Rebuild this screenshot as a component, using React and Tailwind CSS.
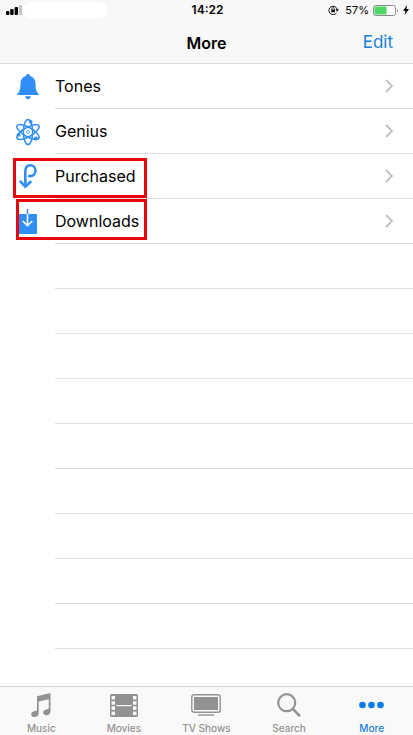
import React from 'react';

function BellIcon() {
  return (
    <svg width="22" height="26" viewBox="0 0 22 26" fill="#2f8ff5" aria-hidden="true">
      <path d="M11 0c1.200 0 2 .8 2.100 1.900C16.500 2.900 18.500 5.500 18.500 9.500c0 5.500.9 8.300 2.900 10 .5.500.6 1.600-.4 1.600H1c-1 0-.9-1.100-.4-1.600 2-1.700 2.900-4.500 2.900-10 0-4 2-6.600 5.400-7.600C9 .8 9.800 0 11 0z" />
      <path d="M8.300 22.300h5.400c0 1.700-1.100 2.900-2.700 2.900s-2.700-1.200-2.700-2.900z" />
    </svg>
  );
}

function AtomIcon() {
  return (
    <svg width="26" height="28" viewBox="0 0 26 28" fill="none" stroke="#2f8ff5" strokeWidth="1.500" aria-hidden="true">
      <ellipse cx="13" cy="14" rx="4.600" ry="12.600" />
      <ellipse cx="13" cy="14" rx="4.600" ry="12.600" transform="rotate(60 13 14)" />
      <ellipse cx="13" cy="14" rx="4.600" ry="12.600" transform="rotate(120 13 14)" />
      <circle cx="13" cy="14" r="1.600" strokeWidth=".8" />
      <circle cx="15.700" cy="3.800" r="1.900" fill="#2f8ff5" stroke="none" />
      <circle cx="3.600" cy="16.800" r="1.900" fill="#2f8ff5" stroke="none" />
      <circle cx="20.800" cy="20.300" r="1.900" fill="#2f8ff5" stroke="none" />
    </svg>
  );
}

function PurchasedIcon() {
  return (
    <svg width="18" height="25" viewBox="0 0 18 25" fill="none" stroke="#2f8ff5" strokeWidth="2.600" aria-hidden="true">
      <path d="M6.300 22.500V7c0-3.500 2-5.700 4.900-5.700 3 0 5.300 2.300 5.300 5.400s-2.300 5.400-5.300 5.400c-.9 0-1.500-.2-2-.5" />
      <path d="M.9 16.800l5.400 5.900 6-5.500" />
    </svg>
  );
}

function DownloadsIcon() {
  return (
    <svg width="19" height="25" viewBox="0 0 19 25" fill="none" aria-hidden="true">
      <path d="M1 5h18v20H1z" fill="#2f8ff5" />
      <path d="M9.500 0v5" stroke="#2f8ff5" strokeWidth="1.500" />
      <path d="M9.500 5v11.500M4.800 12l4.700 4.700 4.700-4.700" stroke="#fff" strokeWidth="1.600" />
    </svg>
  );
}

function Chevron() {
  return (
    <svg width="8" height="14" viewBox="0 0 8 14" fill="none" stroke="#c0c0c4" strokeWidth="1.900" aria-hidden="true">
      <path d="M1 1l6 6-6 6" />
    </svg>
  );
}

function SignalIcon() {
  return (
    <svg width="17" height="10" viewBox="0 0 17 10" aria-hidden="true">
      <rect x="0" y="6" width="3.400" height="4" rx="1" />
      <rect x="4.200" y="4" width="3.400" height="6" rx="1" />
      <rect x="8.600" y="2" width="3.400" height="8" rx="1" />
      <rect x="13" y="0" width="3" height="10" rx="1" fill="#c4c4c4" />
    </svg>
  );
}

function LockIcon() {
  return (
    <svg width="11" height="10" viewBox="0 0 11 10" fill="none" stroke="#111" aria-hidden="true">
      <path d="M8.500 7.900A4.200 4.200 0 1 1 9.200 4.500" />
      <path d="M7.400 4.300h3.600L9.200 6.700z" fill="#111" stroke="none" />
      <rect x="3.200" y="4.500" width="3.800" height="2.800" fill="#111" stroke="none" />
      <path d="M4 4.500V3.600a1.100 1.100 0 0 1 2.200 0v.9" strokeWidth=".8" />
    </svg>
  );
}

function BatteryIcon() {
  return (
    <svg width="26" height="11" viewBox="0 0 26 11" fill="none" aria-hidden="true">
      <rect x=".5" y=".5" width="22" height="10" rx="2" fill="#fff" stroke="#8b8b8b" />
      <rect x="1.500" y="1.500" width="12" height="8" fill="#4cd964" />
      <path d="M24 3.800c1.300.3 1.300 3.100 0 3.400z" fill="#8b8b8b" />
    </svg>
  );
}

function BoltIcon() {
  return (
    <svg width="6" height="10" viewBox="0 0 6 10" aria-hidden="true">
      <path d="M4.200 0L0 5.700h2.400L1.600 10 6 4.100H3.400z" />
    </svg>
  );
}

function MusicIcon() {
  return (
    <svg width="20" height="24" viewBox="0 0 20 24" fill="#929292" aria-hidden="true">
      <path d="M6 3.200L19.500 0v18.200c0 2.400-1.700 4-4.100 4-1.900 0-3.200-1-3.200-2.600 0-2 1.600-3 3.800-3.400 1.200-.2 1.800-.5 1.800-1.500V6.200L7.700 8.600V20c0 2.400-1.700 4-4.200 4C1.500 24 .2 23 .2 21.400c0-2 1.500-3 3.800-3.400 1.300-.2 2-.6 2-1.600z" />
    </svg>
  );
}

function MoviesIcon() {
  return (
    <svg width="28" height="23" viewBox="0 0 28 23" aria-hidden="true">
      <rect width="28" height="23" rx="1.500" fill="#929292" />
      <g fill="#fafafa">
        <rect x="1.500" y="2" width="3.500" height="3.500" />
        <rect x="1.500" y="7.200" width="3.500" height="3.500" />
        <rect x="1.500" y="12.400" width="3.500" height="3.500" />
        <rect x="1.500" y="17.600" width="3.500" height="3.500" />
        <rect x="23" y="2" width="3.500" height="3.500" />
        <rect x="23" y="7.200" width="3.500" height="3.500" />
        <rect x="23" y="12.400" width="3.500" height="3.500" />
        <rect x="23" y="17.600" width="3.500" height="3.500" />
        <rect x="6.500" y="11" width="15" height="1.200" />
      </g>
    </svg>
  );
}

function TvIcon() {
  return (
    <svg width="30" height="22" viewBox="0 0 30 22" fill="none" aria-hidden="true">
      <rect x=".8" y=".8" width="28.400" height="17.400" rx="2" stroke="#929292" strokeWidth="1.400" />
      <rect x="3" y="3" width="24" height="13" fill="#929292" />
      <path d="M7 21h16" stroke="#929292" strokeWidth="1.400" />
    </svg>
  );
}

function SearchIcon() {
  return (
    <svg width="24" height="24" viewBox="0 0 24 24" fill="none" stroke="#929292" aria-hidden="true">
      <circle cx="9.700" cy="9.700" r="8.500" strokeWidth="2.200" />
      <path d="M15.800 15.800l7.200 7.400" strokeWidth="2.600" />
    </svg>
  );
}

function MoreIcon() {
  return (
    <svg width="25" height="24" viewBox="0 0 25 24" fill="#087aeb" aria-hidden="true">
      <circle cx="3.500" cy="12" r="3.300" />
      <circle cx="12.500" cy="12" r="3.300" />
      <circle cx="21.500" cy="12" r="3.300" />
    </svg>
  );
}

const rows = [
  { label: 'Tones', Icon: BellIcon },
  { label: 'Genius', Icon: AtomIcon },
  { label: 'Purchased', Icon: PurchasedIcon, mark: 'left-[13px] top-1 h-10 w-[134px]' },
  { label: 'Downloads', Icon: DownloadsIcon, mark: 'left-4 top-0 h-[41px] w-[131px]' },
];

const emptyRows = Array.from({ length: 9 });

const tabs = [
  { label: 'Music', Icon: MusicIcon },
  { label: 'Movies', Icon: MoviesIcon },
  { label: 'TV Shows', Icon: TvIcon },
  { label: 'Search', Icon: SearchIcon },
  { label: 'More', Icon: MoreIcon, active: true },
];

export default function App() {
  return (
    <div className="flex min-h-screen flex-col bg-white font-['Inter','Liberation_Sans',sans-serif] text-black">
      <header className="h-16 border-b border-[#dcdcdc] bg-[#f8f8f8]">
        <div className="grid h-5 grid-cols-[1fr_auto_1fr] items-center pr-1 pl-1.5 text-xs">
          <div className="flex items-center">
            <SignalIcon />
            <span className="h-4 w-21 rounded-full bg-white" />
          </div>
          <span className="font-semibold">14:22</span>
          <div className="flex items-center justify-end gap-1">
            <LockIcon />
            <span className="pl-0.5 text-[11px]">57%</span>
            <BatteryIcon />
            <BoltIcon />
          </div>
        </div>
        <div className="grid h-11 grid-cols-[1fr_auto_1fr] items-center px-5 pt-0.5">
          <h1 className="col-start-2 text-[16px] font-semibold">More</h1>
          <button type="button" className="justify-self-end text-[17px] text-[#1a7fdc]">Edit</button>
        </div>
      </header>

      <main className="flex-1">
        <ul>
          {rows.map(({ label, Icon, mark }) => (
            <li key={label} className="relative">
              <button type="button" className="flex h-[45px] w-full text-left">
                <span className="flex w-[55px] shrink-0 items-center justify-center">
                  <Icon />
                </span>
                <span className="flex flex-1 items-center justify-between border-b border-[#e0e0e2] pr-5 text-[16px]">
                  {label}
                  <Chevron />
                </span>
              </button>
              {mark && <span className={`pointer-events-none absolute border-3 border-[#e8040c] ${mark}`} />}
            </li>
          ))}
        </ul>
        <div aria-hidden="true" className="pl-[55px]">
          {emptyRows.map((_, i) => (
            <div key={i} className="h-[45px] border-b border-[#e0e0e2]" />
          ))}
        </div>
      </main>

      <nav className="grid h-[49px] grid-cols-5 border-t border-[#d0d0d0] bg-[#f9f9f9]">
        {tabs.map(({ label, Icon, active }) => (
          <button
            key={label}
            type="button"
            className={`flex flex-col items-center pt-1.5 text-[10px] leading-3 font-medium ${active ? 'text-[#1a7fdc]' : 'text-[#929292]'}`}
          >
            <span className="flex h-6 items-center">
              <Icon />
            </span>
            <span className="pt-[5px]">{label}</span>
          </button>
        ))}
      </nav>
    </div>
  );
}
